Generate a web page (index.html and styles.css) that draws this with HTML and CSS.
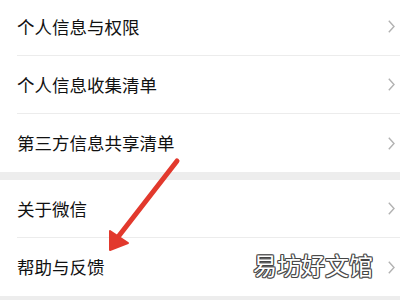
FILE: index.html
```html
<!DOCTYPE html>
<html lang="zh-CN">
<head>
<meta charset="utf-8">
<link rel="stylesheet" href="styles.css">
</head>
<body>
<div class="page">
  <div class="group first">
    <div class="row"><span class="label">个人信息与权限</span><svg class="chev" viewBox="0 0 7 13"><path d="M0.8 0.8 L6 6.5 L0.8 12.2"/></svg></div>
    <div class="row"><span class="label">个人信息收集清单</span><svg class="chev" viewBox="0 0 7 13"><path d="M0.8 0.8 L6 6.5 L0.8 12.2"/></svg></div>
    <div class="row"><span class="label">第三方信息共享清单</span><svg class="chev" viewBox="0 0 7 13"><path d="M0.8 0.8 L6 6.5 L0.8 12.2"/></svg></div>
  </div>
  <div class="group">
    <div class="row"><span class="label">关于微信</span><svg class="chev" viewBox="0 0 7 13"><path d="M0.8 0.8 L6 6.5 L0.8 12.2"/></svg></div>
    <div class="row"><span class="label">帮助与反馈</span><svg class="chev" viewBox="0 0 7 13"><path d="M0.8 0.8 L6 6.5 L0.8 12.2"/></svg></div>
  </div>
  <div class="watermark">易坊好文馆</div>
  <svg class="arrow" viewBox="0 0 400 300" width="400" height="300">
    <line x1="177" y1="161" x2="118" y2="237" stroke="#e2392d" stroke-width="5" stroke-linecap="round"/>
    <polygon points="110,250 110,231 128,243" fill="#e2392d" stroke="#e2392d" stroke-width="2" stroke-linejoin="round"/>
  </svg>
</div>
</body>
</html>
```
FILE: styles.css
```css
html, body {
  margin: 0;
  padding: 0;
  background: #ededed;
}
body {
  width: 400px;
  height: 300px;
  overflow: hidden;
  font-family: "Noto Sans CJK SC", "Noto Sans", sans-serif;
}
.page {
  position: relative;
  width: 400px;
  height: 300px;
  overflow: hidden;
  display: flex;
  flex-direction: column;
  gap: 8px;
}
.group {
  background: #fff;
  padding-left: 17px;
}
.group.first {
  margin-top: -2px;
}
.row {
  height: 57px;
  display: flex;
  align-items: center;
  justify-content: space-between;
  padding-right: 5px;
  border-bottom: 1px solid #ececec;
  box-sizing: content-box;
}
.row:last-child {
  border-bottom: none;
  height: 58px;
}
.label {
  font-size: 17.5px;
  color: #111;
  letter-spacing: 0;
  line-height: 1;
}
.chev {
  width: 7px;
  height: 13px;
  fill: none;
  stroke: #b2b2b2;
  stroke-width: 1.4;
}
.watermark {
  position: absolute;
  left: 253px;
  top: 253px;
  font-size: 24px;
  line-height: 1;
  color: #fff;
  letter-spacing: 0;
  text-shadow: 1px 0 0 #444, -1px 0 0 #444, 0 1px 0 #444, 0 -1px 0 #444, 1px 1px 0 #666, -1px -1px 0 #666, 1px -1px 0 #666, -1px 1px 0 #666;
}
.arrow {
  position: absolute;
  left: 0;
  top: 0;
}
```
